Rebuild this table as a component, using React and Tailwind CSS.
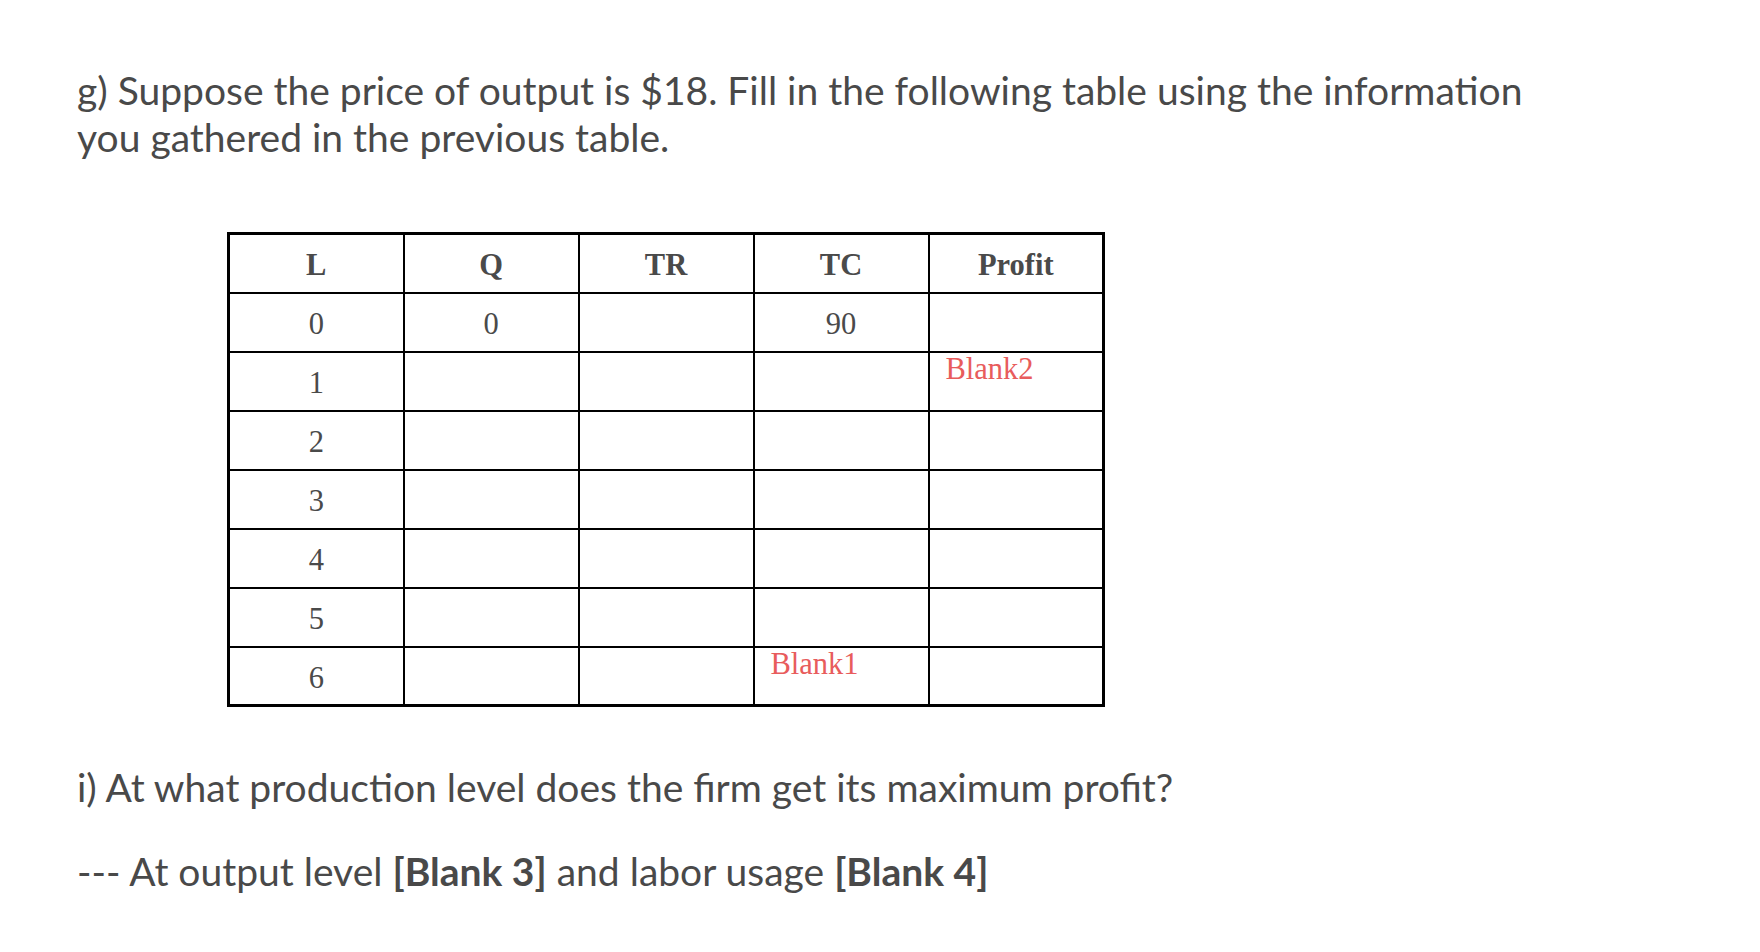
export default function App() {
  const rows = [
    ["0", "0", "", "90", ""],
    ["1", "", "", "", "Blank2"],
    ["2", "", "", "", ""],
    ["3", "", "", "", ""],
    ["4", "", "", "", ""],
    ["5", "", "", "", ""],
    ["6", "", "", "Blank1", ""],
  ];
  return (
    <div className="min-h-[952px] w-[1760px] bg-white pl-[77px] pt-[67px] text-[#494949]" style={{ fontFamily: "Lato, 'Open Sans', sans-serif" }}>
      <p className="text-[39px] leading-[47px] m-0">
        g) Suppose the price of output is $18. Fill in the following table using the information
        <br />
        you gathered in the previous table.
      </p>
      <div className="mt-[71px] ml-[150px]">
        <table
          className="border-collapse border-[3px] border-black table-fixed w-[876px] text-[30.5px] text-[#4a4a4a]"
          style={{ fontFamily: "'Liberation Serif', 'Times New Roman', serif" }}
        >
          <thead>
            <tr className="h-[59px]">
              {["L", "Q", "TR", "TC", "Profit"].map((h) => (
                <th key={h} className="border-2 border-black w-[175px] font-bold text-center align-middle p-0 leading-none pt-[3px]">
                  {h}
                </th>
              ))}
            </tr>
          </thead>
          <tbody>
            {rows.map((r, i) => (
              <tr key={i} className="h-[59px]">
                {r.map((c, j) =>
                  c.startsWith("Blank") ? (
                    <td key={j} className="border-2 border-black align-top p-0 pl-[16px] pt-[1px] leading-none text-[#e85c5c]">
                      {c}
                    </td>
                  ) : (
                    <td key={j} className="border-2 border-black text-center align-middle p-0 leading-none pt-[4px]">
                      {c}
                    </td>
                  )
                )}
              </tr>
            ))}
          </tbody>
        </table>
      </div>
      <p className="mt-[57px] text-[39px] leading-[47px] m-0">
        i) At what production level does the firm get its maximum profit?
      </p>
      <p className="mt-[37px] text-[39px] leading-[47px] m-0">
        --- At output level <span className="font-bold">[Blank 3]</span> and labor usage{" "}
        <span className="font-bold">[Blank 4]</span>
      </p>
    </div>
  );
}
